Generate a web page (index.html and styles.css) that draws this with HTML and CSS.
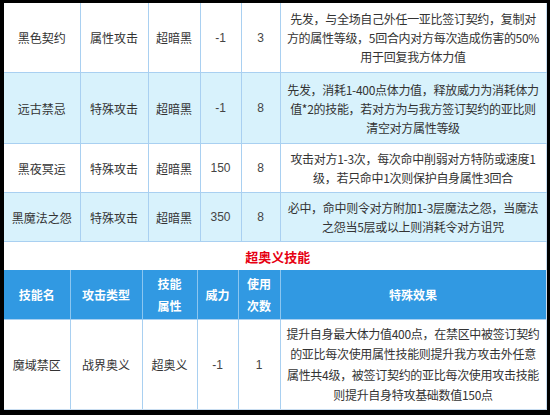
FILE: index.html
```html
<!DOCTYPE html>
<html>
<head>
<meta charset="utf-8">
<link rel="stylesheet" href="styles.css">
</head>
<body>
<div class="frame">
  <table class="skills top">
    <colgroup>
      <col class="c1"><col class="c2"><col class="c3"><col class="c4"><col class="c5"><col class="c6">
    </colgroup>
    <tr class="r1 white">
      <td>黑色契约</td><td>属性攻击</td><td>超暗黑</td><td class="num">-1</td><td class="num">3</td>
      <td class="eff">先发，与全场自己外任一亚比签订契约，复制对<br>方的属性等级，5回合内对方每次造成伤害的50%<br>用于回复我方体力值</td>
    </tr>
    <tr class="r2 blue">
      <td>远古禁忌</td><td>特殊攻击</td><td>超暗黑</td><td class="num">-1</td><td class="num">8</td>
      <td class="eff">先发，消耗1-400点体力值，释放威力为消耗体力<br>值*2的技能，若对方为与我方签订契约的亚比则<br>清空对方属性等级</td>
    </tr>
    <tr class="r3 white">
      <td>黑夜冥运</td><td>特殊攻击</td><td>超暗黑</td><td class="num">150</td><td class="num">8</td>
      <td class="eff">攻击对方1-3次，每次命中削弱对方特防或速度1<br>级，若只命中1次则保护自身属性3回合</td>
    </tr>
    <tr class="r3 blue">
      <td>黑魔法之怨</td><td>特殊攻击</td><td>超暗黑</td><td class="num">350</td><td class="num">8</td>
      <td class="eff">必中，命中则令对方附加1-3层魔法之怨，当魔法<br>之怨当5层或以上则消耗令对方诅咒</td>
    </tr>
    <tr class="title">
      <td colspan="6"><span class="ttl">超奥义技能</span></td>
    </tr>
  </table>
  <table class="skills bottom">
    <colgroup>
      <col class="d1"><col class="d2"><col class="d3"><col class="d4"><col class="d5"><col class="d6">
    </colgroup>
    <tr class="head">
      <th>技能名</th><th>攻击类型</th><th>技能<br>属性</th><th>威力</th><th>使用<br>次数</th><th>特殊效果</th>
    </tr>
    <tr class="r4 white">
      <td>魔域禁区</td><td>战界奥义</td><td>超奥义</td><td class="num">-1</td><td class="num">1</td>
      <td class="eff tall">提升自身最大体力值400点，在禁区中被签订契约<br>的亚比每次使用属性技能则提升我方攻击外任意<br>属性共4级，被签订契约的亚比每次使用攻击技能<br>则提升自身特攻基础数值150点</td>
    </tr>
  </table>
</div>
</body>
</html>
```
FILE: styles.css
```css
html, body {
  margin: 0;
  padding: 0;
  background: #000;
}
body {
  width: 550px;
  height: 415px;
  overflow: hidden;
}
.frame {
  padding: 3px 4px 0 4px;
  width: 542px;
  background: #000;
}
.skills {
  width: 542px;
  table-layout: fixed;
  border-collapse: collapse;
  font-family: "Noto Sans CJK SC", "Liberation Sans", sans-serif;
  font-size: 12px;
  color: #333;
  background: #fff;
}
.skills td, .skills th {
  padding: 0;
  text-align: center;
  vertical-align: middle;
  border: 1px solid #a9d0f1;
}
.skills tr:first-child td { border-top: none; }
.skills td:first-child, .skills th:first-child { border-left: none; }
.skills td:last-child, .skills th:last-child { border-right: 1px solid #c9ddf0; }
.num {
  font-family: "Liberation Sans", "Noto Sans CJK SC", sans-serif;
  color: #444;
}
.c1 { width: 76px; }
.c2 { width: 68px; }
.c3 { width: 52px; }
.c4 { width: 41px; }
.c5 { width: 39px; }
.c6 { width: 266px; }
.d1 { width: 66px; }
.d2 { width: 72px; }
.d3 { width: 55px; }
.d4 { width: 41px; }
.d5 { width: 42px; }
.d6 { width: 266px; }
.white td { background: #fff; }
.blue td { background: #d8f2fc; }
.r1 td { height: 69px; }
.r2 td { height: 70px; }
.r3 td { height: 48px; }
.r4 td { height: 89px; border-bottom: 1px solid #c9ddf0; }
.eff {
  line-height: 19px;
  letter-spacing: -0.3px;
}
.eff.tall { line-height: 20.5px; }
.title td {
  height: 28px;
  background: #fff;
  border-left: none;
  border-right: none;
  border-bottom: none;
}
.ttl {
  color: #e60012;
  font-weight: bold;
  font-size: 13px;
  position: relative;
  left: 3px;
}
.head th {
  height: 49px;
  background: #3199e2;
  color: #fff;
  font-weight: bold;
  font-size: 12px;
  line-height: 22px;
  border: none;
  border-left: 1px solid #8cc6f0;
}
.head th:first-child { border-left: none; }
```
